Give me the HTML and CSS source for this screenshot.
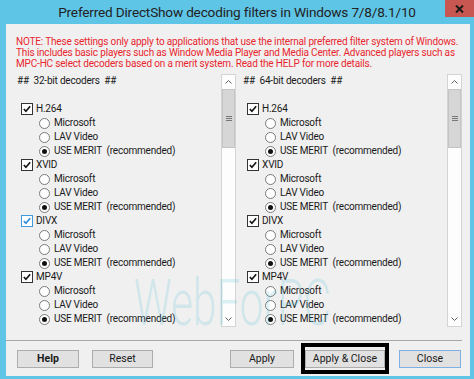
FILE: index.html
```html
<!DOCTYPE html>
<html>
<head>
<meta charset="utf-8">
<link rel="stylesheet" href="styles.css">
</head>
<body>
<div class="window">
  <div class="titlebar">
    <span class="title">Preferred DirectShow decoding filters in Windows 7/8/8.1/10</span>
    <span class="close"><svg width="9" height="8" viewBox="0 0 9 8"><path d="M1 0.5 L8 7.5 M8 0.5 L1 7.5" stroke="#1a1a1a" stroke-width="2"/></svg></span>
  </div>
  <div class="client">
    <div class="note">NOTE: These settings only apply to applications that use the internal preferred filter system of Windows.<br>This includes basic players such as Window Media Player and Media Center. Advanced players such as<br>MPC-HC select decoders based on a merit system. Read the HELP for more details.</div>
    <div class="panels">
      <div class="panel">
        <div class="list">
          <div class="row head">##&nbsp;&nbsp;32-bit decoders&nbsp;&nbsp;##</div>
          <div class="row"></div>
          <div class="row chk"><span class="cb"><svg viewBox="0 0 11 11"><path d="M2 5.5 L4.3 8 L9 2.5" fill="none" stroke="#111" stroke-width="1.8"/></svg></span>H.264</div>
          <div class="row rad"><span class="rb"></span>Microsoft</div>
          <div class="row rad"><span class="rb"></span>LAV Video</div>
          <div class="row rad"><span class="rb on"></span>USE MERIT&nbsp;&nbsp;(recommended)</div>
          <div class="row chk"><span class="cb"><svg viewBox="0 0 11 11"><path d="M2 5.5 L4.3 8 L9 2.5" fill="none" stroke="#111" stroke-width="1.8"/></svg></span>XVID</div>
          <div class="row rad"><span class="rb"></span>Microsoft</div>
          <div class="row rad"><span class="rb"></span>LAV Video</div>
          <div class="row rad"><span class="rb on"></span>USE MERIT&nbsp;&nbsp;(recommended)</div>
          <div class="row chk"><span class="cb focus"><svg viewBox="0 0 11 11"><path d="M2 5.5 L4.3 8 L9 2.5" fill="none" stroke="#2b8ad8" stroke-width="1.8"/></svg></span>DIVX</div>
          <div class="row rad"><span class="rb"></span>Microsoft</div>
          <div class="row rad"><span class="rb"></span>LAV Video</div>
          <div class="row rad"><span class="rb on"></span>USE MERIT&nbsp;&nbsp;(recommended)</div>
          <div class="row chk"><span class="cb"><svg viewBox="0 0 11 11"><path d="M2 5.5 L4.3 8 L9 2.5" fill="none" stroke="#111" stroke-width="1.8"/></svg></span>MP4V</div>
          <div class="row rad"><span class="rb"></span>Microsoft</div>
          <div class="row rad"><span class="rb"></span>LAV Video</div>
          <div class="row rad"><span class="rb on"></span>USE MERIT&nbsp;&nbsp;(recommended)</div>
        </div>
        <div class="scrollbar">
          <div class="arrow"><svg width="7" height="4" viewBox="0 0 7 4"><path d="M0.5 3.5 L3.5 0.5 L6.5 3.5" fill="none" stroke="#606060"/></svg></div>
          <div class="thumb"><span class="grip"></span></div>
          <div class="track"></div>
          <div class="arrow"><svg width="7" height="4" viewBox="0 0 7 4"><path d="M0.5 0.5 L3.5 3.5 L6.5 0.5" fill="none" stroke="#606060"/></svg></div>
        </div>
      </div>
      <div class="panel">
        <div class="list">
          <div class="row head">##&nbsp;&nbsp;64-bit decoders&nbsp;&nbsp;##</div>
          <div class="row"></div>
          <div class="row chk"><span class="cb"><svg viewBox="0 0 11 11"><path d="M2 5.5 L4.3 8 L9 2.5" fill="none" stroke="#111" stroke-width="1.8"/></svg></span>H.264</div>
          <div class="row rad"><span class="rb"></span>Microsoft</div>
          <div class="row rad"><span class="rb"></span>LAV Video</div>
          <div class="row rad"><span class="rb on"></span>USE MERIT&nbsp;&nbsp;(recommended)</div>
          <div class="row chk"><span class="cb"><svg viewBox="0 0 11 11"><path d="M2 5.5 L4.3 8 L9 2.5" fill="none" stroke="#111" stroke-width="1.8"/></svg></span>XVID</div>
          <div class="row rad"><span class="rb"></span>Microsoft</div>
          <div class="row rad"><span class="rb"></span>LAV Video</div>
          <div class="row rad"><span class="rb on"></span>USE MERIT&nbsp;&nbsp;(recommended)</div>
          <div class="row chk"><span class="cb"><svg viewBox="0 0 11 11"><path d="M2 5.5 L4.3 8 L9 2.5" fill="none" stroke="#111" stroke-width="1.8"/></svg></span>DIVX</div>
          <div class="row rad"><span class="rb"></span>Microsoft</div>
          <div class="row rad"><span class="rb"></span>LAV Video</div>
          <div class="row rad"><span class="rb on"></span>USE MERIT&nbsp;&nbsp;(recommended)</div>
          <div class="row chk"><span class="cb"><svg viewBox="0 0 11 11"><path d="M2 5.5 L4.3 8 L9 2.5" fill="none" stroke="#111" stroke-width="1.8"/></svg></span>MP4V</div>
          <div class="row rad"><span class="rb"></span>Microsoft</div>
          <div class="row rad"><span class="rb"></span>LAV Video</div>
          <div class="row rad"><span class="rb on"></span>USE MERIT&nbsp;&nbsp;(recommended)</div>
        </div>
        <div class="scrollbar">
          <div class="arrow"><svg width="7" height="4" viewBox="0 0 7 4"><path d="M0.5 3.5 L3.5 0.5 L6.5 3.5" fill="none" stroke="#606060"/></svg></div>
          <div class="thumb"><span class="grip"></span></div>
          <div class="track"></div>
          <div class="arrow"><svg width="7" height="4" viewBox="0 0 7 4"><path d="M0.5 0.5 L3.5 3.5 L6.5 0.5" fill="none" stroke="#606060"/></svg></div>
        </div>
      </div>
    </div>
    <div class="separator"></div>
    <div class="buttons">
      <div class="group left">
        <button class="btn help">Help</button>
        <button class="btn reset">Reset</button>
      </div>
      <div class="group right">
        <button class="btn apply">Apply</button>
        <div class="highlight"><button class="btn applyclose">Apply &amp; Close</button></div>
        <button class="btn closebtn">Close</button>
      </div>
    </div>
    <div class="watermark">WebForPC</div>
  </div>
</div>
</body>
</html>
```
FILE: styles.css
```css
* { box-sizing: border-box; }
html, body { margin: 0; padding: 0; }
body {
  width: 474px;
  height: 379px;
  overflow: hidden;
  font-family: Roboto, "Noto Sans", sans-serif;
}
.window {
  width: 474px;
  height: 379px;
  background: #5fc5e7;
  display: flex;
  flex-direction: column;
}
.titlebar {
  height: 24px;
  flex: none;
  display: flex;
  align-items: center;
  justify-content: center;
  position: relative;
}
.title {
  font-size: 13.6px;
  letter-spacing: -0.18px;
  color: #222;
}
.close {
  position: absolute;
  top: 0;
  right: 0;
  width: 29px;
  height: 17px;
  background: #c75750;
  display: flex;
  align-items: center;
  justify-content: center;
}
.close svg { display: block; }
.client {
  flex: 1;
  margin: 0 4px 3px 6px;
  background: #f0f0f0;
  position: relative;
  overflow: hidden;
}
.note {
  padding: 12px 0 0 10px;
  font-size: 10px;
  letter-spacing: -0.17px;
  line-height: 11px;
  color: #e8262e;
  white-space: nowrap;
}
.panels {
  display: flex;
  gap: 6px;
  margin: 5px 0 0 10px;
  height: 253px;
}
.panel {
  width: 220px;
  display: flex;
}
.list {
  flex: 1;
  overflow: hidden;
  padding-left: 1px;
  font-size: 10px;
  letter-spacing: -0.2px;
  color: #1a1a1a;
}
.row {
  height: 14px;
  line-height: 14px;
  display: flex;
  align-items: center;
  white-space: nowrap;
}
.chk { padding-left: 4px; }
.rad { padding-left: 22px; }
.cb {
  width: 12px;
  height: 12px;
  border: 1px solid #333;
  background: #fff;
  margin-right: 3px;
  flex: none;
  display: flex;
}
.cb svg { width: 10px; height: 10px; }
.cb.focus { border-color: #3c9be0; }
.rb {
  width: 11px;
  height: 11px;
  border: 1px solid #7a7a7a;
  border-radius: 50%;
  background: #fff;
  margin-right: 4px;
  flex: none;
  display: flex;
  align-items: center;
  justify-content: center;
}
.rb.on::after {
  content: "";
  width: 5px;
  height: 5px;
  border-radius: 50%;
  background: #111;
}
.scrollbar {
  width: 15px;
  flex: none;
  display: flex;
  flex-direction: column;
  border: 1px solid #d4d4d4;
  background: #fdfdfd;
}
.arrow {
  height: 14px;
  flex: none;
  display: flex;
  align-items: center;
  justify-content: center;
}
.arrow svg { display: block; }
.thumb {
  height: 59px;
  flex: none;
  background: #d6d6d6;
  border: 1px solid #c4c4c4;
  display: flex;
  align-items: center;
  justify-content: center;
}
.grip {
  width: 6px;
  height: 5px;
  border-top: 1px solid #777;
  border-bottom: 1px solid #777;
  position: relative;
}
.grip::after {
  content: "";
  position: absolute;
  left: 0;
  right: 0;
  top: 1px;
  border-top: 1px solid #777;
}
.track { flex: 1; }
.separator {
  margin-top: 13px;
  margin-right: 8px;
  border-top: 1px solid #a8a8a8;
}
.buttons {
  display: flex;
  justify-content: space-between;
  align-items: center;
  padding: 0 9px 0 11px;
  margin-top: 2px;
  height: 31px;
}
.group { display: flex; align-items: center; }
.group.left { gap: 13px; }
.btn {
  height: 18px;
  padding: 0;
  margin: 0;
  border: 1px solid #adadad;
  background: #e1e1e1;
  font-family: Roboto, "Noto Sans", sans-serif;
  font-size: 10.5px;
  color: #1a1a1a;
  line-height: 16px;
}
.help { width: 62px; font-weight: bold; }
.reset { width: 61px; }
.apply { width: 64px; margin-right: 7px; }
.highlight {
  border: 4px solid #000;
  padding: 3px 0 2px 0;
  width: 88px;
  display: flex;
  justify-content: center;
  margin-right: 10px;
}
.applyclose { width: 80px; }
.closebtn { width: 62px; border-color: #7fb1e0; }
.watermark {
  position: absolute;
  left: 128px;
  top: 244px;
  font-family: Roboto, sans-serif;
  font-weight: 300;
  font-size: 64px;
  line-height: 72px;
  transform: scaleX(0.66);
  transform-origin: left center;
  color: rgba(80, 190, 215, 0.2);
  pointer-events: none;
  white-space: nowrap;
}
```
